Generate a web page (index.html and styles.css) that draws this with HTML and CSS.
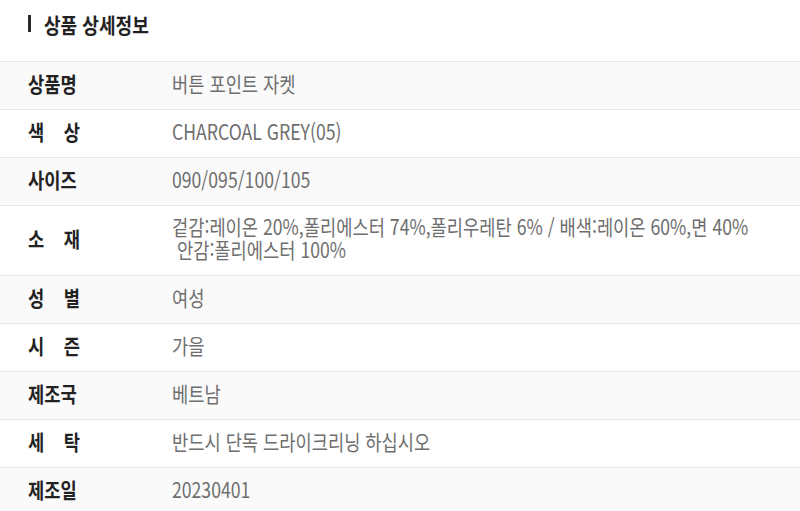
FILE: index.html
```html
<!DOCTYPE html>
<html lang="ko">
<head>
<meta charset="utf-8">
<link rel="stylesheet" href="styles.css">
</head>
<body>
<section class="detail">
  <h2 class="title"><span class="bar"></span><span class="title-text">상품 상세정보</span></h2>
  <div class="table">
    <div class="row alt"><div class="label">상품명</div><div class="value">버튼 포인트 자켓</div></div>
    <div class="row"><div class="label">색 상</div><div class="value">CHARCOAL GREY(05)</div></div>
    <div class="row alt"><div class="label">사이즈</div><div class="value">090/095/100/105</div></div>
    <div class="row tall"><div class="label">소 재</div><div class="value"><div class="line">겉감:레이온 20%,폴리에스터 74%,폴리우레탄 6% / 배색:레이온 60%,면 40%</div><div class="line">&nbsp;안감:폴리에스터 100%</div></div></div>
    <div class="row alt"><div class="label">성 별</div><div class="value">여성</div></div>
    <div class="row"><div class="label">시 즌</div><div class="value">가을</div></div>
    <div class="row alt"><div class="label">제조국</div><div class="value">베트남</div></div>
    <div class="row"><div class="label">세 탁</div><div class="value">반드시 단독 드라이크리닝 하십시오</div></div>
    <div class="row alt"><div class="label">제조일</div><div class="value">20230401</div></div>
  </div>
</section>
</body>
</html>
```
FILE: styles.css
```css
html, body {
  margin: 0;
  padding: 0;
  background: #ffffff;
}
body {
  font-family: "Noto Sans CJK KR", "Noto Sans", sans-serif;
  width: 800px;
  overflow: hidden;
}
.title {
  margin: 0;
  height: 61px;
  display: flex;
  align-items: center;
  gap: 13px;
  padding-left: 28px;
  box-sizing: border-box;
  padding-bottom: 14px;
}
.title-text {
  display: block;
  font-size: 21px;
  font-weight: 700;
  color: #222;
  line-height: 24px;
  transform: scaleX(0.86);
  transform-origin: left center;
  white-space: nowrap;
}
.bar {
  display: block;
  width: 3px;
  height: 17px;
  background: #2a2a2a;
}
.table {
  border-top: 1px solid #e6e6e6;
}
.row {
  display: flex;
  align-items: center;
  box-sizing: border-box;
  height: 48px;
  padding-bottom: 5px;
  border-bottom: 1px solid #e6e6e6;
  background: #fff;
}
.row.alt {
  background: #fafafa;
}
.row.tall {
  height: 70px;
}
.label {
  flex: none;
  width: 62px;
  margin-left: 28px;
  margin-right: 82px;
  font-size: 21px;
  font-weight: 700;
  color: #222;
  line-height: 24px;
  text-align: justify;
  text-align-last: justify;
  white-space: nowrap;
  transform: scaleX(0.84);
  transform-origin: left center;
}
.value {
  font-size: 21px;
  color: #6e6e6e;
  line-height: 24px;
  white-space: nowrap;
  transform: scaleX(0.84);
  transform-origin: left center;
}
.line {
  height: 23px;
  line-height: 23px;
}
```
